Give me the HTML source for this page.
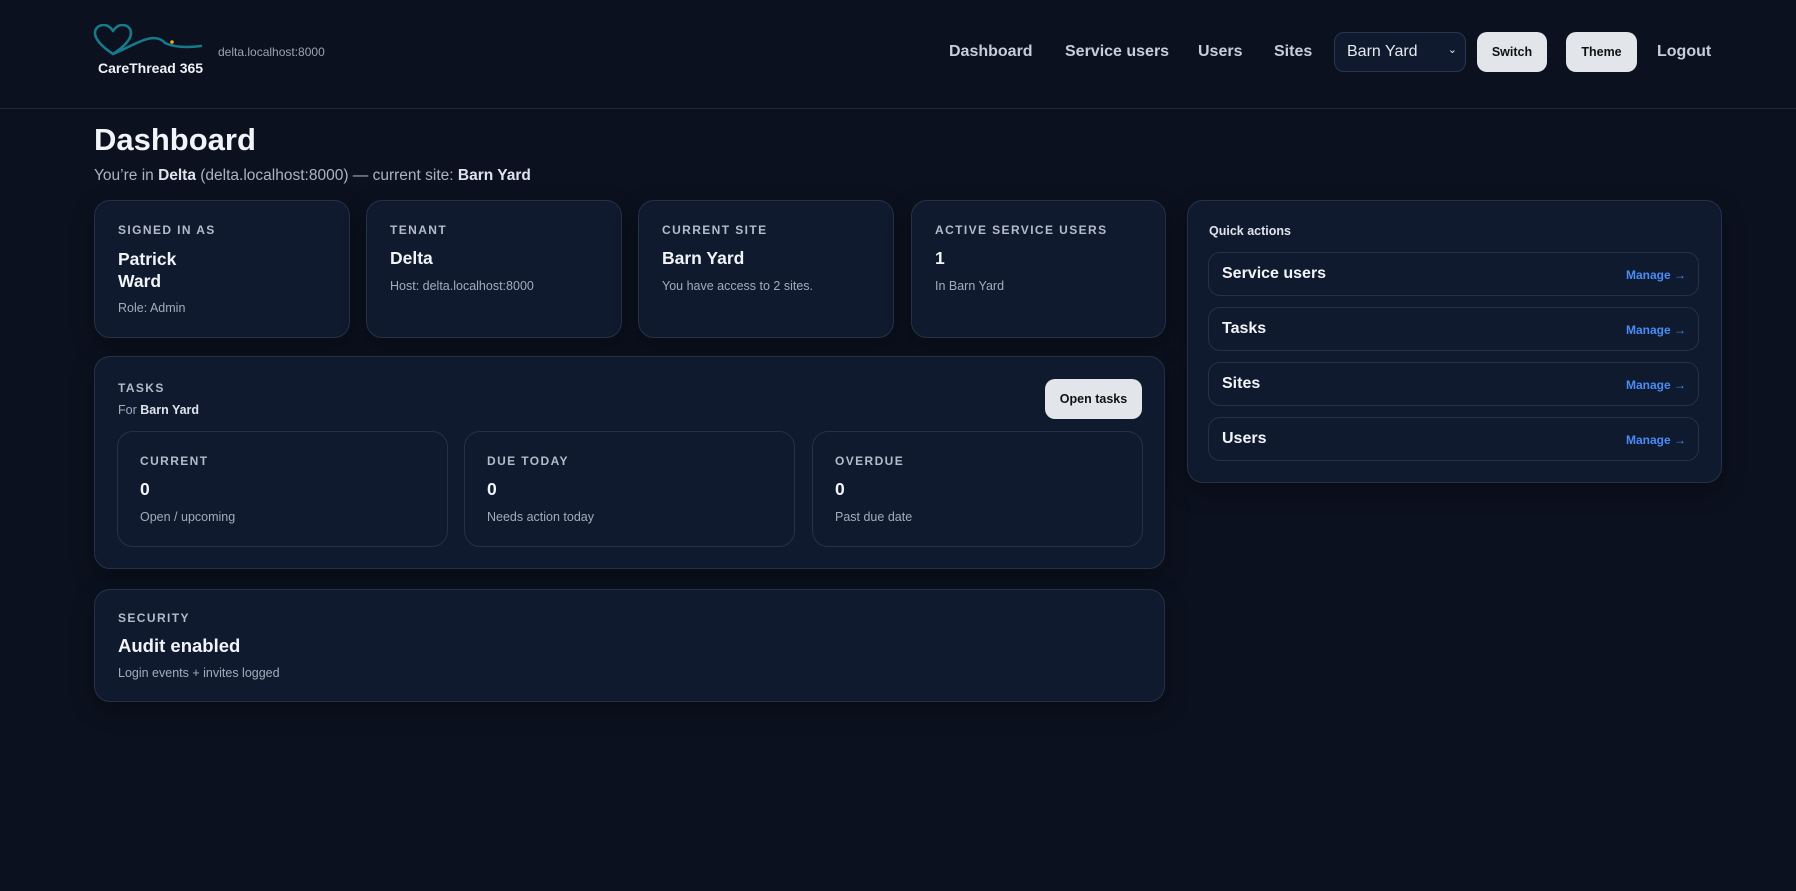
<!DOCTYPE html>
<html><head><meta charset="utf-8"><style>
*{box-sizing:border-box;margin:0;padding:0}
body{width:1796px;height:891px;background:#0b111e;font-family:"Liberation Sans","DejaVu Sans",sans-serif;color:#e5e9f0;position:relative;overflow:hidden}
.a{position:absolute;white-space:nowrap}
.hdr{position:absolute;left:0;top:0;width:1796px;height:109px;border-bottom:1px solid #1f2736;background:#0b111e}
.nav{color:#c7ced9;font-size:16px;font-weight:bold;top:43px}
.btn{position:absolute;background:#e2e5ea;color:#111;border-radius:10px;font-size:12.5px;font-weight:bold;display:flex;align-items:center;justify-content:center}
.card{position:absolute;background:#0f1a2e;border:1px solid #263149;border-radius:16px;box-shadow:0 8px 24px rgba(0,0,0,.3)}
.lbl{font-size:12px;font-weight:bold;letter-spacing:1.4px;color:#b4bccb}
.big{font-size:17.5px;font-weight:bold;color:#f1f4f8}
.sub{font-size:12.5px;color:#a3acbb}
.qi{position:absolute;left:20px;width:491px;height:44px;border:1px solid #263149;border-radius:12px}
.qi b{position:absolute;left:13px;top:12px;font-size:16px;color:#f1f4f8}
.qi i{position:absolute;right:12px;top:15px;font-size:12px;font-weight:bold;font-style:normal;color:#4a8cf5}
</style></head><body>
<div class="hdr"></div>
<svg class="a" style="left:93px;top:24px" width="115" height="36" viewBox="0 0 115 36">
<path d="M20 30 C8 22 2 15 2 9 C2 4 6 1 11 1 C15 1 18 4 20 7 C22 4 25 1 29 1 C34 1 38 4 38 9 C38 15 32 22 20 30 C35 24 48 15 60 14 Q68 14 72 19 Q85 25 108 22" fill="none" stroke="#157a8c" stroke-width="2.6" stroke-linecap="round" stroke-linejoin="round"/>
<circle cx="79" cy="18" r="1.8" fill="#f5a623"/>
</svg>
<div class="a" style="left:98px;top:60px;font-size:14px;font-weight:bold;color:#eef1f5">CareThread 365</div>
<div class="a" style="left:218px;top:45px;font-size:12px;color:#9aa3b2">delta.localhost:8000</div>
<div class="a nav" style="left:949px">Dashboard</div>
<div class="a nav" style="left:1065px">Service users</div>
<div class="a nav" style="left:1198px">Users</div>
<div class="a nav" style="left:1274px">Sites</div>
<div class="a" style="left:1334px;top:32px;width:132px;height:40px;border:1px solid #2a3650;border-radius:10px;background:#0f1a2e;color:#e5e9f0;font-size:16px;padding:10px 12px">Barn Yard<span style="position:absolute;right:8px;top:10px;font-size:11px">&#8964;</span></div>
<div class="btn" style="left:1477px;top:32px;width:70px;height:40px">Switch</div>
<div class="btn" style="left:1566px;top:32px;width:71px;height:40px">Theme</div>
<div class="a nav" style="left:1657px">Logout</div>

<div class="a" style="left:94px;top:122px;font-size:31px;font-weight:bold;color:#f1f4f8">Dashboard</div>
<div class="a" style="left:94px;top:167px;font-size:15.5px;color:#aab4c4">You’re in <b style="color:#dfe4ec">Delta</b> (delta.localhost:8000) — current site: <b style="color:#dfe4ec">Barn Yard</b></div>

<div class="card" style="left:94px;top:200px;width:256px;height:138px">
<div class="a lbl" style="left:23px;top:22px">SIGNED IN AS</div>
<div class="a big" style="left:23px;top:47px;line-height:22px">Patrick<br>Ward</div>
<div class="a sub" style="left:23px;top:100px">Role: Admin</div></div>
<div class="card" style="left:366px;top:200px;width:256px;height:138px">
<div class="a lbl" style="left:23px;top:22px">TENANT</div>
<div class="a big" style="left:23px;top:47px">Delta</div>
<div class="a sub" style="left:23px;top:78px">Host: delta.localhost:8000</div></div>
<div class="card" style="left:638px;top:200px;width:256px;height:138px">
<div class="a lbl" style="left:23px;top:22px">CURRENT SITE</div>
<div class="a big" style="left:23px;top:47px">Barn Yard</div>
<div class="a sub" style="left:23px;top:78px">You have access to 2 sites.</div></div>
<div class="card" style="left:911px;top:200px;width:255px;height:138px">
<div class="a lbl" style="left:23px;top:22px">ACTIVE SERVICE USERS</div>
<div class="a big" style="left:23px;top:47px">1</div>
<div class="a sub" style="left:23px;top:78px">In Barn Yard</div></div>

<div class="card" style="left:94px;top:356px;width:1071px;height:213px">
<div class="a lbl" style="left:23px;top:24px">TASKS</div>
<div class="a sub" style="left:23px;top:46px">For <b style="color:#dfe4ec">Barn Yard</b></div>
<div class="btn" style="left:950px;top:22px;width:97px;height:40px">Open tasks</div>
<div class="card" style="left:22px;top:74px;width:331px;height:116px;box-shadow:none">
<div class="a lbl" style="left:22px;top:22px">CURRENT</div><div class="a big" style="left:22px;top:47px">0</div><div class="a sub" style="left:22px;top:78px">Open / upcoming</div></div>
<div class="card" style="left:369px;top:74px;width:331px;height:116px;box-shadow:none">
<div class="a lbl" style="left:22px;top:22px">DUE TODAY</div><div class="a big" style="left:22px;top:47px">0</div><div class="a sub" style="left:22px;top:78px">Needs action today</div></div>
<div class="card" style="left:717px;top:74px;width:331px;height:116px;box-shadow:none">
<div class="a lbl" style="left:22px;top:22px">OVERDUE</div><div class="a big" style="left:22px;top:47px">0</div><div class="a sub" style="left:22px;top:78px">Past due date</div></div>
</div>

<div class="card" style="left:94px;top:589px;width:1071px;height:113px">
<div class="a lbl" style="left:23px;top:21px">SECURITY</div>
<div class="a" style="left:23px;top:45px;font-size:18.5px;font-weight:bold;color:#f1f4f8">Audit enabled</div>
<div class="a sub" style="left:23px;top:76px">Login events + invites logged</div></div>

<div class="card" style="left:1187px;top:200px;width:535px;height:283px">
<div class="a" style="left:21px;top:23px;font-size:12.5px;font-weight:bold;color:#dfe4ec">Quick actions</div>
<div class="qi" style="top:51px"><b>Service users</b><i>Manage →</i></div>
<div class="qi" style="top:106px"><b>Tasks</b><i>Manage →</i></div>
<div class="qi" style="top:161px"><b>Sites</b><i>Manage →</i></div>
<div class="qi" style="top:216px"><b>Users</b><i>Manage →</i></div>
</div>
</body></html>
